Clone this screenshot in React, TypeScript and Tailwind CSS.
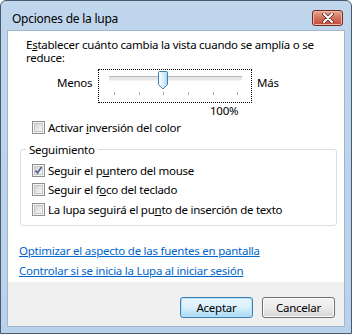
import React from "react";

// ─── Helpers ─────────────────────────────────────────────────────────────────

function CheckBox({ checked = false }: { checked?: boolean }) {
  return (
    <span className="relative flex h-[13px] w-[13px] shrink-0 items-center justify-center border border-[#8f8f8f] bg-[#f4f4f4]">
      <span className="h-[9px] w-[9px] border border-[#c6c6c6] bg-gradient-to-br from-[#d4d4d4] to-[#f8f8f8]" />
      {checked && (
        <svg className="absolute left-[1px] top-[1px]" width="9" height="9" viewBox="0 0 9 9">
          <path d="M1.5 4.5 L3.5 7 L7.5 1" fill="none" stroke="#4b5e88" strokeWidth="1.6" />
        </svg>
      )}
    </span>
  );
}

function CheckRow({ checked, children }: { checked?: boolean; children: React.ReactNode }) {
  return (
    <div className="flex h-[13px] items-center">
      <CheckBox checked={checked} />
      <span className="ml-[3px] whitespace-nowrap leading-[13px]">{children}</span>
    </div>
  );
}

function Slider() {
  const ticks = [114, 139, 163, 188, 213, 237];
  return (
    <svg width="152" height="32" viewBox="99 70 152 32">
      <rect x="109" y="76" width="133" height="1" fill="#b6b6b6" />
      <rect x="109" y="77" width="133" height="3" fill="#e4e7e8" />
      <rect x="109" y="80" width="133" height="1" fill="#f4f4f4" />
      {ticks.map((x) => (
        <rect key={x} x={x} y="92" width="1" height="3" fill="#a8a8a8" />
      ))}
      <defs>
        <linearGradient id="thumb" x1="0" x2="1" y1="0" y2="0">
          <stop offset="0" stopColor="#ffffff" />
          <stop offset="0.5" stopColor="#dff1fb" />
          <stop offset="1" stopColor="#a9d6f3" />
        </linearGradient>
      </defs>
      <path
        d="M158.5 72.5 Q158.5 71.5 159.5 71.5 L166.5 71.5 Q167.5 71.5 167.5 72.5 L167.5 84.5 L163 89 L158.5 84.5 Z"
        fill="url(#thumb)"
        stroke="#3c7fb1"
        strokeWidth="1"
      />
    </svg>
  );
}

function Button({ label, primary }: { label: string; primary?: boolean }) {
  return (
    <button
      className={
        primary
          ? "flex h-[21px] w-[73px] items-center justify-center rounded-[3px] border border-[#3c7fb1] bg-gradient-to-b from-[#eaf6fd] via-[#d9f0fc] to-[#a7d9f5] text-black shadow-[inset_0_0_0_1px_#b5e2fa]"
          : "flex h-[21px] w-[73px] items-center justify-center rounded-[3px] border border-[#707070] bg-gradient-to-b from-[#f2f2f2] via-[#ebebeb] to-[#d5d5d5] text-black shadow-[inset_0_0_0_1px_#fcfcfc]"
      }
    >
      {label}
    </button>
  );
}

// ─── Main component ───────────────────────────────────────────────────────────

export default function App() {
  return (
    <div
      className="h-[334px] w-[352px] overflow-hidden rounded-t-[6px] border border-[#4a5a6c] bg-gradient-to-b from-[#c0d6ed] to-[#b9d1ea] text-[11.5px] tracking-[-0.25px] text-black"
      style={{ fontFamily: '"Noto Sans", "Open Sans", sans-serif' }}
    >
      {/* title bar */}
      <div className="flex h-[29px] items-start justify-between pl-[11px] pr-[8px]">
        <span className="pt-[11px] text-[12px] leading-[14px]">Opciones de la lupa</span>
        <div className="mt-[9px] flex h-[16px] w-[31px] items-center justify-center rounded-[3px] border border-[#6f2a20] bg-gradient-to-b from-[#e6a795] via-[#d3705c] to-[#c24a36] shadow-[inset_0_0_0_1px_#eeb7a8]">
          <svg width="12" height="10" viewBox="0 0 12 10">
            <path d="M2 1 L10 9 M10 1 L2 9" stroke="#5a2a24" strokeWidth="3.6" strokeLinecap="round" />
            <path d="M2 1 L10 9 M10 1 L2 9" stroke="#ffffff" strokeWidth="2" strokeLinecap="round" />
          </svg>
        </div>
      </div>

      {/* client area */}
      <div className="mx-[6px] flex h-[297px] flex-col border border-[#9fb6ce]">
        <div className="flex h-[251px] flex-col bg-white">
          <div className="whitespace-nowrap pl-[18px] pt-[7px]">
            <div className="h-[13px] leading-[13px]">
              E<u>s</u>tablecer cuánto cambia la vista cuando se amplía o se
            </div>
            <div className="h-[13px] leading-[13px]">reduce:</div>
          </div>

          <div className="mt-[5px] flex items-start pl-[49px]">
            <span className="w-[41px] pt-[7px] leading-[13px]">Menos</span>
            <div className="h-[34px] w-[154px] border border-dotted border-black">
              <Slider />
            </div>
            <span className="ml-[5px] pt-[7px] leading-[13px]">Más</span>
          </div>

          <div className="pl-[202px] pt-[1px] leading-[13px]">100%</div>

          <div className="mt-[4px] pl-[24px]">
            <CheckRow>
              Activar <u>i</u>nversión del color
            </CheckRow>
          </div>

          <div className="relative ml-[12px] mt-[15px] h-[77px] w-[317px] rounded-[3px] border border-[#d5dfe5]">
            <span className="absolute left-[5px] top-[-7px] bg-white px-[3px] leading-[13px]">Seguimiento</span>
            <div className="flex flex-col gap-[6px] pl-[11px] pt-[14px]">
              <CheckRow checked>
                Seguir el p<u>u</u>ntero del mouse
              </CheckRow>
              <CheckRow>
                Seguir el f<u>o</u>co del teclado
              </CheckRow>
              <div className="mt-[1px]">
                <CheckRow>
                  La lupa seguirá el pu<u>n</u>to de inserción de texto
                </CheckRow>
              </div>
            </div>
          </div>

          <div className="mt-[18px] flex flex-col items-start gap-[7px] pl-[11px]">
            <a className="leading-[13px] text-[#0066cc] underline">Optimizar el aspecto de las fuentes en pantalla</a>
            <a className="leading-[13px] text-[#0066cc] underline">Controlar si se inicia la Lupa al iniciar sesión</a>
          </div>
        </div>

        <div className="flex flex-1 items-start justify-end gap-[9px] bg-[#f0f0f0] pr-[9px] pt-[15px]">
          <Button label="Aceptar" primary />
          <Button label="Cancelar" />
        </div>
      </div>
    </div>
  );
}
